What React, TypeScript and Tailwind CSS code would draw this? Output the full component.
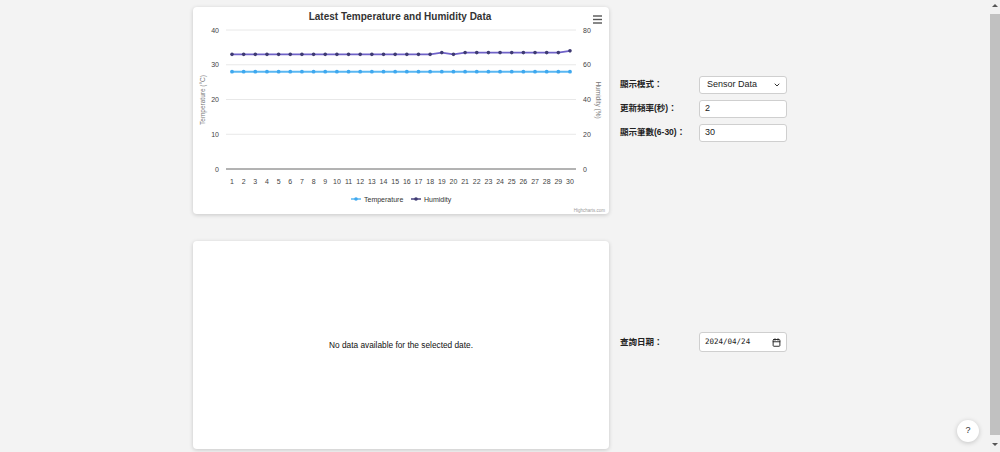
import React from 'react';
import { ChevronDown, Calendar } from 'lucide-react';

const humidity = [66, 66, 66, 66, 66, 66, 66, 66, 66, 66, 66, 66, 66, 66, 66, 66, 66, 66, 67, 66, 67, 67, 67, 67, 67, 67, 67, 67, 67, 68];
const temperature = Array.from({ length: 30 }, () => 28);

const xAt = (i: number) => 39 + i * 11.655;
const yTemp = (t: number) => 162 - (t / 40) * 139;
const yHum = (h: number) => 162 - (h / 80) * 139;

const font = '"Liberation Sans", Arial, sans-serif';

const Chart: React.FC = () => {
  const tempPts = temperature.map((t, i) => `${xAt(i)},${yTemp(t)}`).join(' ');
  const humPts = humidity.map((h, i) => `${xAt(i)},${yHum(h)}`).join(' ');
  const grid = [0, 10, 20, 30, 40];

  return (
    <svg width="416" height="207" viewBox="0 0 416 207" style={{ fontFamily: font }}>
      <text x="207" y="13" textAnchor="middle" fontSize="10" fontWeight="bold" fill="#333">
        Latest Temperature and Humidity Data
      </text>
      {/* menu */}
      <g stroke="#555" strokeWidth="1.4">
        <line x1="400" y1="9" x2="409" y2="9" />
        <line x1="400" y1="12.5" x2="409" y2="12.5" />
        <line x1="400" y1="16" x2="409" y2="16" />
      </g>

      {grid.map((g) => (
        <g key={g}>
          {g > 0 && <line x1="33" y1={yTemp(g)} x2="383" y2={yTemp(g)} stroke="#e8e8e8" strokeWidth="1" />}
          <text x="26" y={yTemp(g) + 2.5} textAnchor="end" fontSize="7" fill="#444">{g}</text>
          <text x="390" y={yTemp(g) + 2.5} fontSize="7" fill="#444">{g * 2}</text>
        </g>
      ))}
      <line x1="33" y1="162" x2="383" y2="162" stroke="#666" strokeWidth="1" />

      <text transform="translate(12 93) rotate(-90)" textAnchor="middle" fontSize="6.5" fill="#777">Temperature (°C)</text>
      <text transform="translate(403 93) rotate(90)" textAnchor="middle" fontSize="6.5" fill="#777">Humidity (%)</text>

      {temperature.map((_, i) => (
        <text key={i} x={xAt(i)} y="177" textAnchor="middle" fontSize="7" fill="#444">{i + 1}</text>
      ))}

      <polyline points={tempPts} fill="none" stroke="#5ab7f2" strokeWidth="2" />
      {temperature.map((t, i) => (
        <circle key={i} cx={xAt(i)} cy={yTemp(t)} r="1.9" fill="#3ea8ef" />
      ))}
      <polyline points={humPts} fill="none" stroke="#6f62c8" strokeWidth="1.8" />
      {humidity.map((h, i) => (
        <circle key={i} cx={xAt(i)} cy={yHum(h)} r="1.8" fill="#3e3a72" />
      ))}

      {/* legend */}
      <line x1="158" y1="192" x2="168" y2="192" stroke="#5ab7f2" strokeWidth="1.5" />
      <circle cx="163" cy="192" r="1.8" fill="#3ea8ef" />
      <text x="171" y="194.5" fontSize="7" fill="#333">Temperature</text>
      <line x1="218" y1="192" x2="228" y2="192" stroke="#4a4380" strokeWidth="1.5" />
      <circle cx="223" cy="192" r="1.8" fill="#3e3a72" />
      <text x="231" y="194.5" fontSize="7" fill="#333">Humidity</text>

      <text x="412" y="205" textAnchor="end" fontSize="4.5" fill="#999">Highcharts.com</text>
    </svg>
  );
};

const Label: React.FC<{ children: React.ReactNode }> = ({ children }) => (
  <span className="w-[79px] text-[8.5px] font-bold text-[#222]">{children}</span>
);

const Field: React.FC<{ children: React.ReactNode }> = ({ children }) => (
  <div className="flex h-[18px] w-[88px] items-center rounded-[3px] border border-[#cfcfcf] bg-white px-[5px] text-[9px] text-[#222]">
    {children}
  </div>
);

export default function App() {
  return (
    <div
      className="relative flex h-[452px] w-[1000px] overflow-hidden bg-[#f3f3f3]"
      style={{ fontFamily: '"Liberation Sans", "Noto Sans CJK TC", Arial, sans-serif' }}
    >
      <main className="flex w-[990px] flex-col gap-[27px] pl-[193px] pt-[7px]">
        <div className="flex items-center gap-[11px]">
          <div className="h-[207px] w-[416px] rounded-[4px] bg-white shadow-[0_1px_4px_rgba(0,0,0,0.18)]">
            <Chart />
          </div>
          <div className="flex flex-col gap-[6px] pb-[4px]">
            <div className="flex items-center">
              <Label>顯示模式：</Label>
              <Field>
                <span className="ml-[2px] flex-1">Sensor Data</span>
                <ChevronDown size={8} strokeWidth={3} className="text-[#333]" />
              </Field>
            </div>
            <div className="flex items-center">
              <Label>更新頻率(秒)：</Label>
              <Field>2</Field>
            </div>
            <div className="flex items-center">
              <Label>顯示筆數(6-30)：</Label>
              <Field>30</Field>
            </div>
          </div>
        </div>

        <div className="flex items-center gap-[11px]">
          <div className="flex h-[208px] w-[416px] items-center justify-center rounded-[4px] bg-white shadow-[0_1px_4px_rgba(0,0,0,0.18)]">
            <span className="text-[8.3px] text-[#111]">No data available for the selected date.</span>
          </div>
          <div className="flex items-center pb-[6px]">
            <Label>查詢日期：</Label>
            <div className="flex h-[20px] w-[88px] items-center rounded-[3px] border border-[#cfcfcf] bg-white px-[5px] text-[#222]">
              <span className="flex-1 text-[7.5px]" style={{ fontFamily: '"DejaVu Sans Mono", monospace' }}>2024/04/24</span>
              <Calendar size={9} strokeWidth={2.5} />
            </div>
          </div>
        </div>
      </main>

      {/* scrollbar */}
      <div className="flex w-[10px] flex-col items-center bg-[#f1f1f1]">
        <div className="mt-[4px] h-0 w-0 border-x-[3px] border-b-[3px] border-x-transparent border-b-[#555]" />
        <div className="mt-[7px] h-[421px] w-[10px] bg-[#c1c1c1]" />
        <div className="mt-[8px] h-0 w-0 border-x-[3px] border-t-[3px] border-x-transparent border-t-[#555]" />
      </div>

      <div className="absolute left-[957px] top-[420px] flex h-[22px] w-[22px] items-center justify-center rounded-full bg-white text-[9px] text-[#333] shadow-[0_1px_5px_rgba(0,0,0,0.2)]">
        ?
      </div>
    </div>
  );
}
